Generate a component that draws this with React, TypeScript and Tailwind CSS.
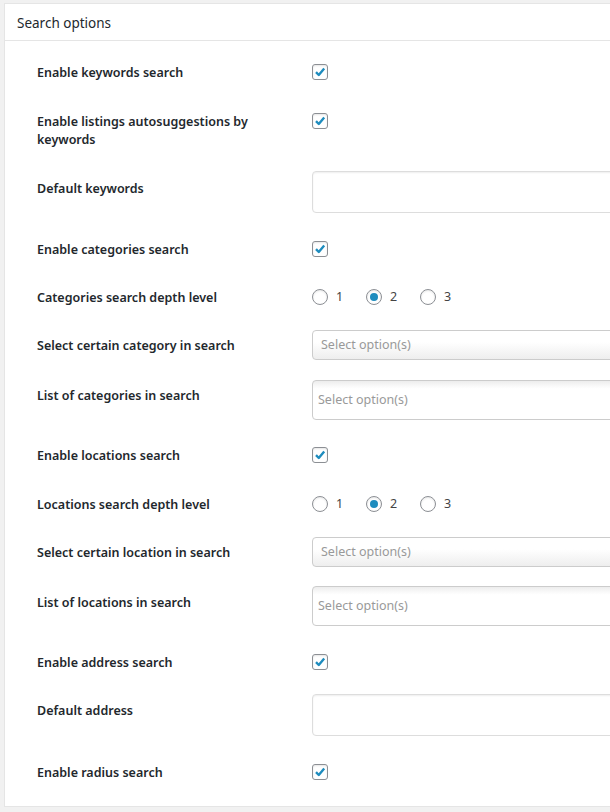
import React from "react";

type Ctrl =
  | { kind: "check" }
  | { kind: "radio" }
  | { kind: "text"; top: number }
  | { kind: "select"; top: number }
  | { kind: "multi"; top: number };

type RowData = { label: string; h: number; ctrl: Ctrl };

const rows: RowData[] = [
  { label: "Enable keywords search", h: 49, ctrl: { kind: "check" } },
  { label: "Enable listings autosuggestions by keywords", h: 67, ctrl: { kind: "check" } },
  { label: "Default keywords", h: 61, ctrl: { kind: "text", top: 7 } },
  { label: "Enable categories search", h: 48, ctrl: { kind: "check" } },
  { label: "Categories search depth level", h: 48, ctrl: { kind: "radio" } },
  { label: "Select certain category in search", h: 50, ctrl: { kind: "select", top: 9 } },
  { label: "List of categories in search", h: 60, ctrl: { kind: "multi", top: 9 } },
  { label: "Enable locations search", h: 49, ctrl: { kind: "check" } },
  { label: "Locations search depth level", h: 48, ctrl: { kind: "radio" } },
  { label: "Select certain location in search", h: 50, ctrl: { kind: "select", top: 9 } },
  { label: "List of locations in search", h: 60, ctrl: { kind: "multi", top: 8 } },
  { label: "Enable address search", h: 48, ctrl: { kind: "check" } },
  { label: "Default address", h: 62, ctrl: { kind: "text", top: 8 } },
  { label: "Enable radius search", h: 48, ctrl: { kind: "check" } },
];

function Checkbox() {
  return (
    <span className="mt-[16px] flex h-[16px] w-[16px] items-center justify-center rounded-[3px] border border-[#8c8f94] bg-white shadow-[inset_0_1px_2px_rgba(0,0,0,0.1)]">
      <svg width="12" height="12" viewBox="0 0 12 12">
        <path d="M2 6.2 L4.8 9 L10.2 2.6" fill="none" stroke="#1e8cbe" strokeWidth="2.4" strokeLinejoin="round" />
      </svg>
    </span>
  );
}

function Radio({ on, n }: { on?: boolean; n: number }) {
  return (
    <span className="flex w-[54px] items-center gap-[8px]">
      <span className="flex h-[16px] w-[16px] items-center justify-center rounded-full border border-[#8c8f94] bg-white shadow-[inset_0_1px_2px_rgba(0,0,0,0.1)]">
        {on && <span className="h-[8px] w-[8px] rounded-full bg-[#1e8cbe]" />}
      </span>
      <span className="text-[12.5px] leading-[16px] text-[#444]">{n}</span>
    </span>
  );
}

function Control({ c }: { c: Ctrl }) {
  if (c.kind === "check") return <Checkbox />;
  if (c.kind === "radio")
    return (
      <div className="mt-[16px] flex">
        <Radio n={1} />
        <Radio n={2} on />
        <Radio n={3} />
      </div>
    );
  if (c.kind === "text")
    return (
      <div
        style={{ marginTop: c.top }}
        className="h-[42px] w-[330px] rounded-[4px] border border-[#ddd] bg-white shadow-[inset_0_1px_2px_rgba(0,0,0,0.07)]"
      />
    );
  if (c.kind === "select")
    return (
      <div
        style={{ marginTop: c.top }}
        className="flex h-[30px] w-[330px] items-center rounded-[4px] border border-[#ccc] bg-gradient-to-b from-white from-40% to-[#eee] pl-[8px] text-[12.5px] text-[#999]"
      >
        Select option(s)
      </div>
    );
  return (
    <div
      style={{ marginTop: c.top }}
      className="flex h-[40px] w-[330px] items-center rounded-[4px] border border-[#ccc] bg-[linear-gradient(#eee_1%,#fff_20%)] pl-[5px] text-[12.5px] text-[#999]"
    >
      Select option(s)
    </div>
  );
}

export default function App() {
  return (
    <div className="h-[812px] w-[610px] overflow-hidden bg-[#f1f1f1] font-['Noto_Sans','Open_Sans',sans-serif]">
      <div className="ml-[4px] mt-[3px] w-[640px] border border-[#e5e5e5] bg-white">
        <div className="flex h-[37px] items-center border-b border-[#e5e5e5] pl-[12px] pt-[2px] text-[13.5px] text-[#23282d]">
          Search options
        </div>
        <div className="pb-[10px] pt-[7px]">
          {rows.map((r, i) => (
            <div key={i} style={{ height: r.h }} className="flex">
              <div className="w-[307px] shrink-0 pl-[32px] pr-[40px] pt-[16px]">
                <div className="w-[235px] text-[12.5px] font-semibold leading-[18px] text-[#23282d]">
                  {r.label}
                </div>
              </div>
              <div className="flex-1">
                <Control c={r.ctrl} />
              </div>
            </div>
          ))}
        </div>
      </div>
    </div>
  );
}
